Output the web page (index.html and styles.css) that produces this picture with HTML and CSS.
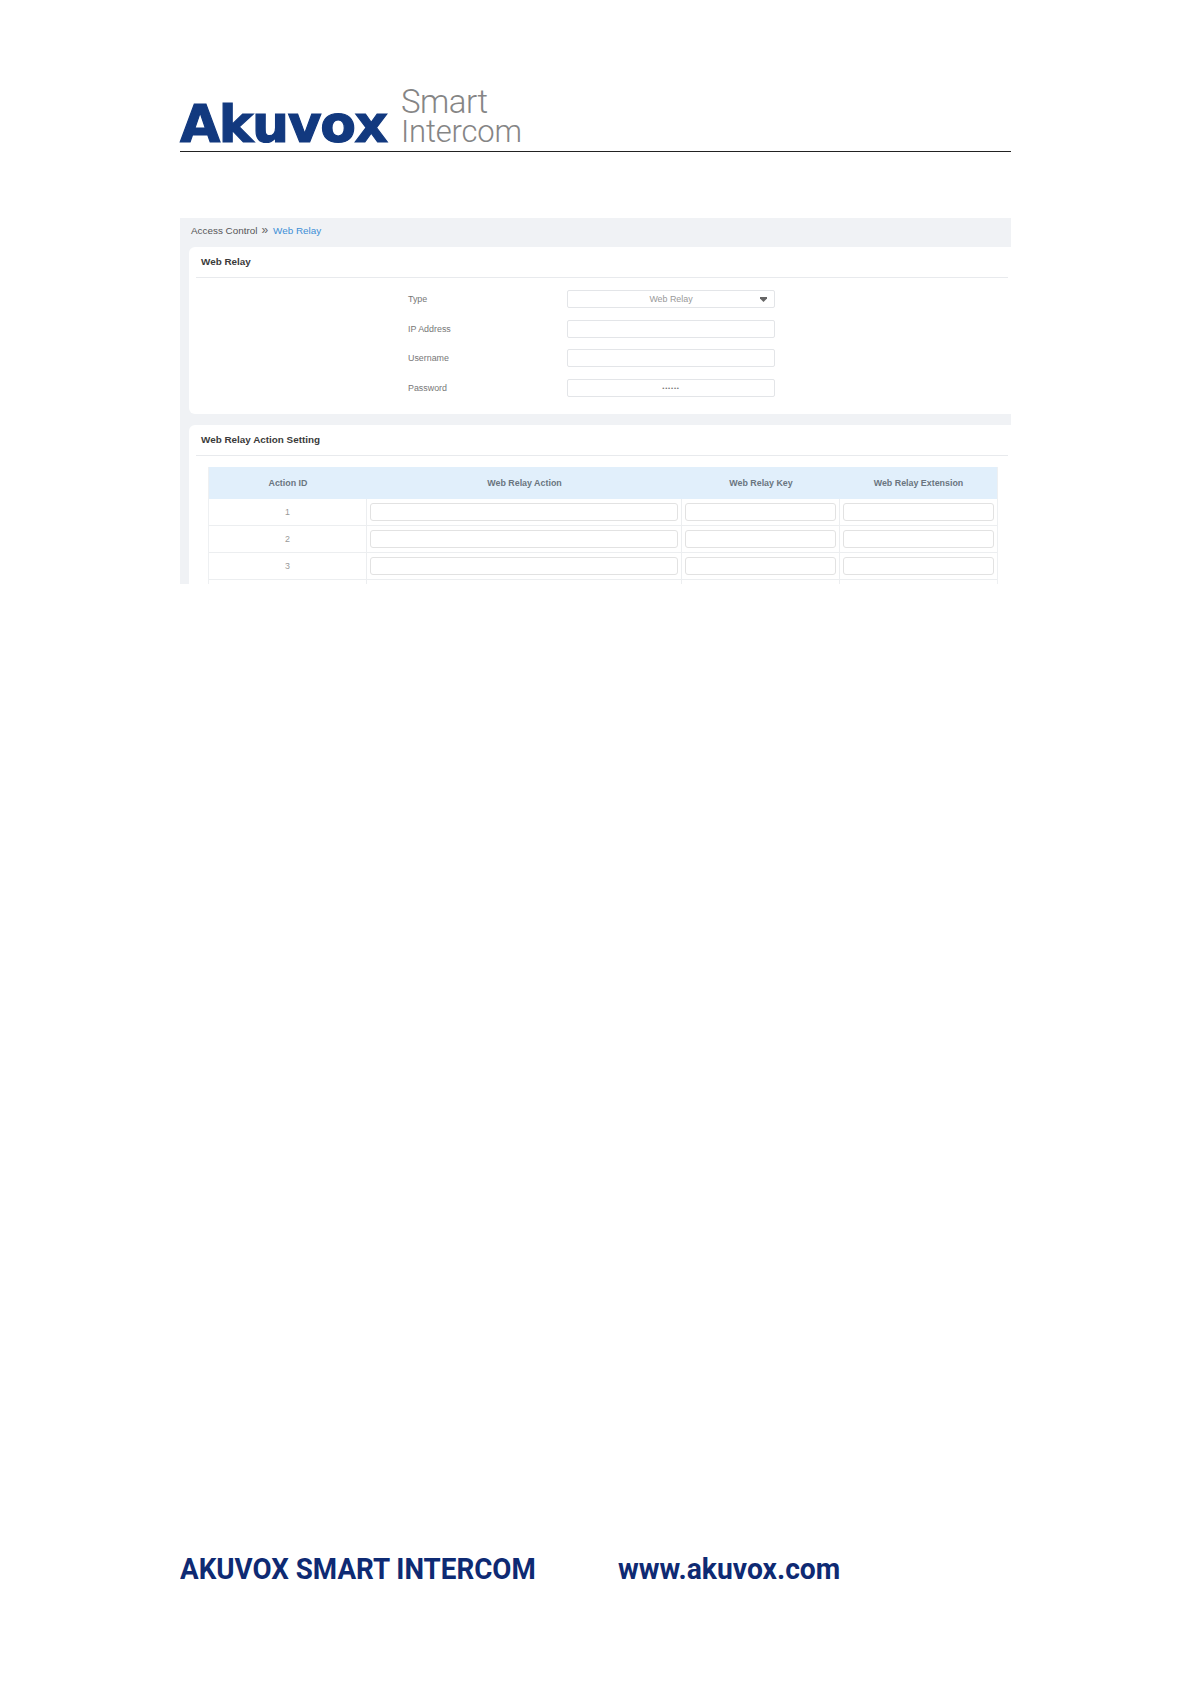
FILE: index.html
```html
<!DOCTYPE html>
<html lang="en">
<head>
<meta charset="utf-8">
<title>Web Relay</title>
<link rel="stylesheet" href="styles.css">
</head>
<body>
<div class="page">
  <header class="brand">
    <span class="brand-name">Akuvox</span>
    <span class="brand-tag"><span class="tag-smart">Smart</span><span class="tag-inter">Intercom</span></span>
  </header>
  <section class="shot">
    <div class="crumbs"><span>Access Control</span><span class="crumb-sep">»</span><span class="crumb-now">Web Relay</span></div>
    <div class="card card-first">
      <h2 class="card-title">Web Relay</h2>
      <div class="form">
        <div class="form-row"><span class="form-label">Type</span><div class="field field-select"><span>Web Relay</span><svg class="caret" width="7" height="5" viewBox="0 0 7 5"><path d="M0 0H7V1.500L3.500 5L0 1.500Z"/></svg></div></div>
        <div class="form-row"><span class="form-label">IP Address</span><div class="field"></div></div>
        <div class="form-row"><span class="form-label">Username</span><div class="field"></div></div>
        <div class="form-row"><span class="form-label">Password</span><div class="field field-pass">••••••</div></div>
      </div>
    </div>
    <div class="card card-second">
      <h2 class="card-title">Web Relay Action Setting</h2>
      <div class="table">
        <div class="tr th"><span>Action ID</span><span>Web Relay Action</span><span>Web Relay Key</span><span>Web Relay Extension</span></div>
        <div class="tr"><span class="id">1</span><span class="cell"><i class="box"></i></span><span class="cell"><i class="box"></i></span><span class="cell"><i class="box"></i></span></div>
        <div class="tr"><span class="id">2</span><span class="cell"><i class="box"></i></span><span class="cell"><i class="box"></i></span><span class="cell"><i class="box"></i></span></div>
        <div class="tr"><span class="id">3</span><span class="cell"><i class="box"></i></span><span class="cell"><i class="box"></i></span><span class="cell"><i class="box"></i></span></div>
        <div class="tr"><span class="id"></span><span class="cell"><i class="box"></i></span><span class="cell"><i class="box"></i></span><span class="cell"><i class="box"></i></span></div>
      </div>
    </div>
  </section>
  <footer class="foot">
    <span class="foot-a"><span class="foot-text foot-text-a">AKUVOX SMART INTERCOM</span></span>
    <span class="foot-text foot-text-b">www.akuvox.com</span>
  </footer>
</div>
</body>
</html>
```
FILE: styles.css
```css
* { box-sizing: border-box; }
html, body { margin: 0; background: #fff; }
body { font-family: "Liberation Sans", Arial, sans-serif; }
.page { width: 1191px; height: 1684px; padding: 83px 180px 0; overflow: hidden; }

.brand { height: 69px; border-bottom: 1.5px solid #222; display: flex; align-items: flex-end; gap: 11px; padding-bottom: 5px; }
.brand-name { font-family: "DejaVu Sans", sans-serif; font-weight: 700; font-size: 52px; line-height: 44px; color: #12397f; letter-spacing: -1.4px; -webkit-text-stroke: 1.2px #12397f; width: 210px; white-space: nowrap; }
.brand-tag { display: flex; flex-direction: column; font-family: Roboto, sans-serif; font-weight: 300; color: #858585; white-space: nowrap; }
.tag-smart { font-size: 33px; line-height: 30px; letter-spacing: -.5px; }
.tag-inter { font-size: 31px; line-height: 29px; letter-spacing: -.2px; }

.shot { margin-top: 66px; height: 366px; background: #f0f2f5; overflow: hidden; }
.crumbs { height: 29px; padding: 6px 0 0 11px; font-size: 9.900px; line-height: 13px; color: #555; display: flex; gap: 4px; }
.crumb-sep { font-size: 12px; line-height: 12px; color: #666; font-weight: 400; }
.crumb-now { color: #3d8fd6; margin-left: 1px; }

.card { margin-left: 9px; background: #fff; border-radius: 6px 0 0 6px; padding: 0 3px 0 7px; }
.card-first { height: 167px; }
.card-second { margin-top: 11px; height: 200px; }
.card-title { margin: 0; height: 31px; padding: 7.500px 0 0 5px; font-size: 9.900px; line-height: 13px; font-weight: 700; color: #3a3a3a; border-bottom: 1px solid #e8eaed; }

.form { padding-top: 12px; }
.form-row { display: flex; align-items: center; height: 18px; margin-bottom: 11.500px; padding-left: 212px; }
.form-label { width: 159px; font-size: 8.900px; color: #777; }
.field { width: 208px; height: 18px; border: 1px solid #e3e5e8; border-radius: 2px; background: #fff; display: flex; align-items: center; justify-content: center; font-size: 8.900px; color: #999; position: relative; }
.field-pass { font-size: 6px; letter-spacing: .8px; color: #777; }
.caret { position: absolute; right: 7px; top: 6px; fill: #666; }

.table { margin: 11px 10px 0 12px; border-right: 1px solid #eef0f2; border-left: 1px solid #eef0f2; }
.tr { display: grid; grid-template-columns: 158px 315px 158px 1fr; height: 27px; border-bottom: 1px solid #eceef0; }
.th { height: 32px; background: #e1effb; border-bottom: 0; }
.th span { display: flex; align-items: center; justify-content: center; padding-bottom: 1px; font-size: 8.900px; font-weight: 700; color: #6a757f; }
.id { display: flex; align-items: center; justify-content: center; padding-bottom: 1px; font-size: 8.900px; color: #999; border-right: 1px solid #eceef0; }
.cell { padding: 4px 3px; border-right: 1px solid #eceef0; }
.cell:last-child { border-right: 0; }
.box { display: block; height: 18px; border: 1px solid #e2e2e2; border-radius: 3px; background: #fff; }

.foot { margin-top: 968px; display: flex; font-family: Roboto, sans-serif; font-weight: 700; font-size: 29.500px; line-height: 34px; color: #0e2a73; white-space: nowrap; }
.foot-a { width: 438px; }
.foot-text { display: inline-block; transform-origin: left center; }
.foot-text-a { transform: scaleX(.94); }
.foot-text-b { transform: scaleX(.958); }
```
